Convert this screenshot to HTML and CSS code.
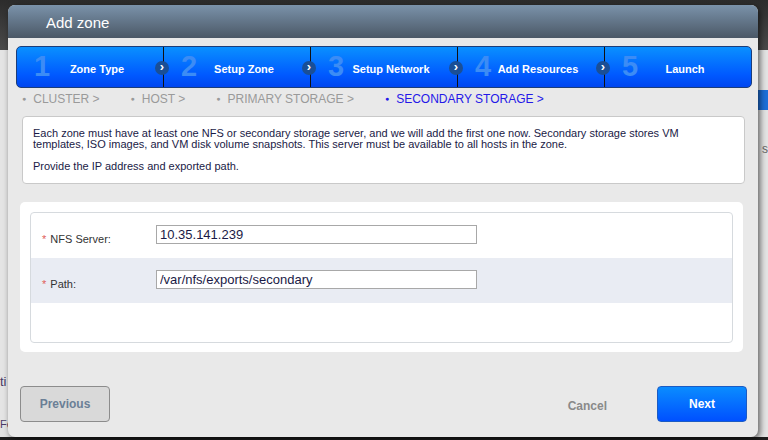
FILE: index.html
```html
<!DOCTYPE html>
<html lang="en">
<head>
  <meta charset="UTF-8" />
  <title>Add zone</title>
  <link rel="stylesheet" href="styles.css">
</head>
<body>

  <!-- PAGE BEHIND THE DIALOG -->
  <div class="page">
    <div class="page-header"></div>
    <div class="page-body">
      <span class="page-text first">ti</span>
      <span class="page-text second">Fe...</span>
      <span class="page-side-btn"></span>
      <span class="page-side-text">s</span>
    </div>
  </div>

  <!-- ADD ZONE DIALOG -->
  <div class="dialog">
    <div class="dialog-title">Add zone</div>

    <div class="dialog-body">
      <!-- Wizard steps -->
      <div class="steps">
        <div class="step"><span class="num">1</span><span class="label">Zone Type</span><span class="arrow">&rsaquo;</span></div>
        <div class="step"><span class="num">2</span><span class="label">Setup Zone</span><span class="arrow">&rsaquo;</span></div>
        <div class="step"><span class="num">3</span><span class="label">Setup Network</span><span class="arrow">&rsaquo;</span></div>
        <div class="step"><span class="num">4</span><span class="label">Add Resources</span><span class="arrow">&rsaquo;</span></div>
        <div class="step"><span class="num">5</span><span class="label">Launch</span></div>
      </div>

      <!-- Sub steps -->
      <div class="substeps">
        <span class="substep">CLUSTER &gt;</span>
        <span class="substep">HOST &gt;</span>
        <span class="substep">PRIMARY STORAGE &gt;</span>
        <span class="substep active">SECONDARY STORAGE &gt;</span>
      </div>

      <div class="info">
        <p>Each zone must have at least one NFS or secondary storage server, and we will add the first one now. Secondary storage stores VM templates, ISO images, and VM disk volume snapshots. This server must be available to all hosts in the zone.</p>
        <p>Provide the IP address and exported path.</p>
      </div>

      <div class="form-wrap">
        <div class="form">
          <div class="form-row">
            <label><span class="req">*</span> NFS Server:</label>
            <input type="text" value="10.35.141.239">
          </div>
          <div class="form-row odd">
            <label><span class="req">*</span> Path:</label>
            <input type="text" value="/var/nfs/exports/secondary">
          </div>
        </div>
      </div>
    </div>

    <div class="dialog-buttons">
      <button class="btn prev">Previous</button>
      <span class="cancel">Cancel</span>
      <button class="btn next">Next</button>
    </div>
  </div>

</body>
</html>
```

FILE: styles.css
```css
body {
  margin: 0;
  font-family: Arial, "Liberation Sans", sans-serif;
  background: #1e1e1e;
  width: 768px;
  height: 440px;
  overflow: hidden;
  position: relative;
}

/* PAGE BEHIND */
.page {
  height: 437px;
  display: flex;
  flex-direction: column;
}

.page-header {
  height: 50px;
  background: linear-gradient(#2c2c2c, #4a4a4a);
}

.page-body {
  flex: 1;
  background: #e4e4e4;
  position: relative;
}

.page-text {
  position: absolute;
  left: 0;
  font-size: 13px;
  color: #4a3a66;
}

.page-text.first { top: 324px; }
.page-text.second { top: 368px; font-size: 11px; }

.page-side-btn {
  position: absolute;
  right: 0;
  top: 40px;
  width: 12px;
  height: 20px;
  background: #1d6fd8;
}

.page-side-text {
  position: absolute;
  right: 0;
  top: 92px;
  font-size: 12px;
  color: #666;
}

/* DIALOG */
.dialog {
  position: absolute;
  left: 8px;
  top: 5px;
  width: 750px;
  height: 432px;
  background: #e9e9e9;
  border-radius: 7px;
  box-shadow: 2px 2px 6px rgba(0, 0, 0, 0.6);
  display: flex;
  flex-direction: column;
  overflow: hidden;
}

.dialog-title {
  height: 33px;
  background: linear-gradient(#7a92aa, #4b5866);
  color: #fff;
  font-size: 15px;
  line-height: 35px;
  padding-left: 38px;
}

.dialog-body {
  flex: 1;
  padding: 8px 6px 0 8px;
}

/* STEPS */
.steps {
  display: flex;
  height: 40px;
  border: 1px solid #1c3d7a;
  border-radius: 5px;
  background: linear-gradient(#0a90ff, #0059ff 70%, #0046f0);
  overflow: hidden;
}

.step {
  position: relative;
  width: 146px;
  display: flex;
  align-items: center;
  justify-content: center;
  border-right: 1px solid #111;
}

.step:last-child {
  border-right: none;
  flex: 1;
}

.step .num {
  position: absolute;
  left: 17px;
  top: 3px;
  font-size: 29px;
  font-weight: bold;
  color: #3c8cf5;
}

.step .label {
  color: #fff;
  font-size: 11px;
  font-weight: bold;
  padding-left: 14px;
  padding-top: 3px;
}

.step .arrow {
  position: absolute;
  right: -6px;
  top: 14px;
  width: 14px;
  height: 14px;
  border-radius: 50%;
  background: #1a4f96;
  color: #fff;
  font-size: 13px;
  font-weight: bold;
  line-height: 12px;
  text-align: center;
  z-index: 1;
}

/* SUB STEPS */
.substeps {
  display: flex;
  gap: 31px;
  padding: 4px 0 0 6px;
  height: 19px;
}

.substep {
  font-size: 12px;
  color: #9a9a9a;
}

.substep::before {
  content: "\25CF";
  font-size: 7px;
  vertical-align: 2px;
  margin-right: 7px;
}

.substep.active {
  color: #2418e8;
}

/* INFO */
.info {
  margin: 5px 7px 0 6px;
  background: #fff;
  border: 1px solid #c9c9c9;
  border-radius: 4px;
  padding: 11px 56px 4px 10px;
  font-size: 11px;
  line-height: 11px;
  color: #1a1a46;
  height: 51px;
}

.info p {
  margin: 0 0 11px 0;
}

/* FORM */
.form-wrap {
  margin: 18px 9px 0 4px;
  background: #fff;
  border-radius: 5px;
  padding: 10px;
  height: 130px;
}

.form {
  border: 1px solid #d6dade;
  border-radius: 4px;
  height: 129px;
}

.form-row {
  display: flex;
  align-items: center;
  height: 45px;
  padding-left: 11px;
}

.form-row.odd {
  background: #e9ecf3;
}

.form-row label {
  width: 114px;
  font-size: 11px;
  color: #333;
  padding-top: 6px;
}

.req {
  color: #e0605a;
  margin-right: 1px;
}

.form-row input {
  width: 313px;
  height: 13px;
  border: 1px solid #a8a8a8;
  padding: 2px 3px;
  font-family: Arial, "Liberation Sans", sans-serif;
  font-size: 13px;
  color: #1a1a46;
  margin-top: -3px;
}

/* BUTTONS */
.dialog-buttons {
  display: flex;
  align-items: center;
  height: 36px;
  padding: 0 11px 15px 12px;
}

.btn {
  width: 90px;
  height: 36px;
  border-radius: 4px;
  font-family: Arial, "Liberation Sans", sans-serif;
  font-size: 12px;
  font-weight: bold;
  cursor: pointer;
}

.btn.prev {
  background: #d9d9d9;
  border: 1px solid #8c8c8c;
  color: #6b7f96;
}

.cancel {
  margin-left: auto;
  margin-right: 50px;
  margin-top: 3px;
  font-size: 12px;
  font-weight: bold;
  color: #8a8a8a;
}

.btn.next {
  background: linear-gradient(#0a8cff, #0050ff);
  border: 1px solid #1b5bc4;
  color: #fff;
}
```
